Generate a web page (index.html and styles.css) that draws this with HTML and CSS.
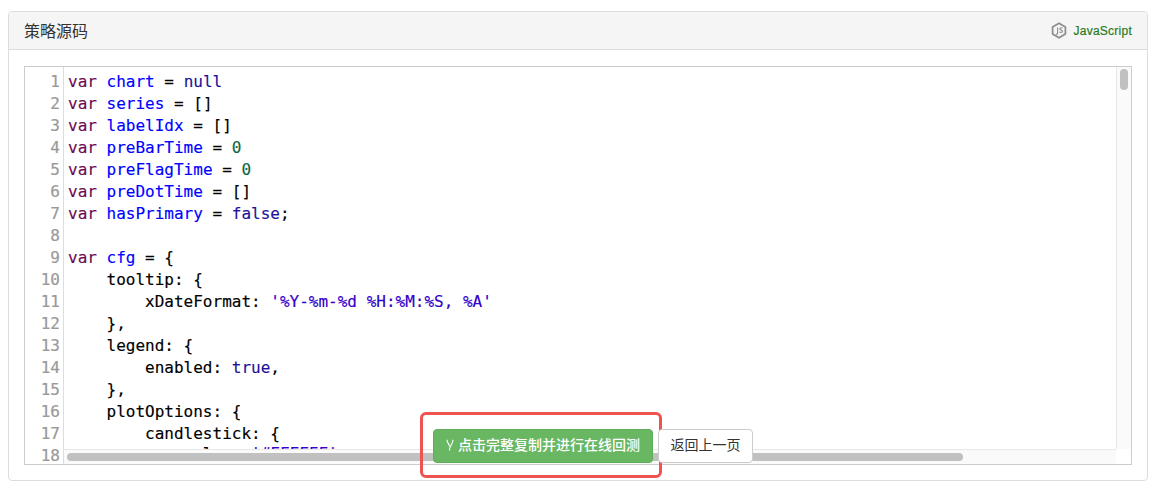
FILE: index.html
```html
<!DOCTYPE html>
<html lang="zh">
<head>
<meta charset="utf-8">
<title>策略源码</title>
<link rel="stylesheet" href="styles.css">
</head>
<body>
<section class="panel">
  <header class="panel-head">
    <h3 class="panel-title">策略源码</h3>
    <div class="lang">
      <svg class="lang-icon" viewBox="0 0 16 17" width="16" height="17" aria-hidden="true">
        <path d="M8 1.200 14.400 4.900v7.200L8 15.800 1.600 12.100V4.900Z" fill="none" stroke="#8c8c8c" stroke-width="1.700" stroke-linejoin="round"/>
        <path d="M6.600 5.500v5.700c0 1-.9 1.200-1.700.8" fill="none" stroke="#8c8c8c" stroke-width="1.100"/>
        <path d="M11.400 6.300c-.5-.7-2.500-.9-2.600.4-.1 1.400 2.700 1 2.700 2.500 0 1.400-2.200 1.400-3 .6" fill="none" stroke="#8c8c8c" stroke-width="1.100"/>
      </svg>
      <span class="lang-name">JavaScript</span>
    </div>
  </header>
  <div class="panel-body">
    <div class="editor">
      <div class="gutter">
        <div>1</div><div>2</div><div>3</div><div>4</div><div>5</div><div>6</div><div>7</div><div>8</div><div>9</div><div>10</div><div>11</div><div>12</div><div>13</div><div>14</div><div>15</div><div>16</div><div>17</div><div>18</div>
      </div>
      <pre class="code"><span class="k">var</span> <span class="d">chart</span> = <span class="a">null</span>
<span class="k">var</span> <span class="d">series</span> = []
<span class="k">var</span> <span class="d">labelIdx</span> = []
<span class="k">var</span> <span class="d">preBarTime</span> = <span class="n">0</span>
<span class="k">var</span> <span class="d">preFlagTime</span> = <span class="n">0</span>
<span class="k">var</span> <span class="d">preDotTime</span> = []
<span class="k">var</span> <span class="d">hasPrimary</span> = <span class="a">false</span>;

<span class="k">var</span> <span class="d">cfg</span> = {
    tooltip: {
        xDateFormat: <span class="s">'%Y-%m-%d %H:%M:%S, %A'</span>
    },
    legend: {
        enabled: <span class="a">true</span>,
    },
    plotOptions: {
        candlestick: {
<span class="last-line">            color: <span class="s">'#FFFFFF'</span>,</span></pre>
      <div class="scroll-v"><div class="thumb-v"></div></div>
      <div class="scroll-h"><div class="thumb-h"></div></div>
      <div class="scroll-corner"></div>
    </div>
  </div>
</section>
<div class="actions">
  <button class="btn btn-run" type="button">
    <svg class="fork" viewBox="0 0 8 12" width="8" height="12" aria-hidden="true">
      <path d="M1 .8C1 4 3.400 5 3.400 7.200M7 .8C7 5.500 3.400 6 3.400 11.500" fill="none" stroke="#fff" stroke-width="1.100"/>
    </svg>
    点击完整复制并进行在线回测
  </button>
  <button class="btn btn-back" type="button">返回上一页</button>
</div>
</body>
</html>
```

FILE: styles.css
```css
* { box-sizing: border-box; }
html, body { margin: 0; height: 100%; }
body {
  position: relative;
  padding: 11px 9px 8px 8px;
  background: #fff;
  overflow: hidden;
  font-family: "Liberation Sans", "Noto Sans CJK SC", sans-serif;
  color: #333;
}
.panel {
  height: 470px;
  border: 1px solid #ddd;
  border-radius: 4px;
  background: #fff;
  display: flex;
  flex-direction: column;
}
.panel-head {
  height: 38px;
  flex: none;
  display: flex;
  align-items: center;
  justify-content: space-between;
  padding: 0 15px;
  background: #f5f5f5;
  border-bottom: 1px solid #ddd;
  border-radius: 3px 3px 0 0;
}
.panel-title {
  margin: 0;
  padding-bottom: 2px;
  font-size: 16px;
  font-weight: 400;
  color: #333;
}
.lang { display: flex; align-items: center; gap: 6px; }
.lang-icon { display: block; }
.lang-name {
  font-size: 12px;
  letter-spacing: .25px;
  color: #2a7a1e;
  -webkit-text-stroke: .2px #2a7a1e;
}
.panel-body { flex: 1; padding: 16px 15px 15px; min-height: 0; }
.editor {
  position: relative;
  height: 100%;
  display: flex;
  border: 1px solid #ccc;
  overflow: hidden;
  background: #fff;
}
.gutter {
  width: 39px;
  flex: none;
  border-right: 1px solid #ddd;
  padding: 4px 3px 0 0;
  text-align: right;
  color: #999;
  font: 16px/22px "DejaVu Sans Mono", monospace;
  -webkit-text-stroke: .2px #999;
}
.code {
  margin: 0;
  padding: 4px 0 0 4px;
  flex: 1;
  color: #000;
  font: 16px/22px "DejaVu Sans Mono", monospace;
  -webkit-text-stroke: .15px;
}
.last-line { display: block; margin-top: -2px; }
.k { color: #6d0a50; }
.d { color: #00f; }
.a { color: #219; }
.n { color: #164; }
.s { color: #30c; }
.scroll-v {
  position: absolute;
  top: 0; right: 0; bottom: 15px;
  width: 15px;
  background: #fafafa;
  border-left: 1px solid #e8e8e8;
}
.thumb-v {
  margin: 2px 0 0 3px;
  width: 8px;
  height: 21px;
  border-radius: 4px;
  background: #c1c1c1;
}
.scroll-h {
  position: absolute;
  left: 39px; right: 15px; bottom: 0;
  height: 15px;
  padding: 3px 0 0 3px;
  background: #fafafa;
  border-top: 1px solid #e8e8e8;
}
.thumb-h {
  width: 896px;
  height: 8px;
  border-radius: 4px;
  background: #c1c1c1;
}
.scroll-corner {
  position: absolute;
  right: 0; bottom: 0;
  width: 15px; height: 15px;
  background: #fff;
}
.actions {
  position: absolute;
  left: 420px;
  top: 412px;
  display: flex;
  align-items: flex-start;
  width: 242px;
  height: 66px;
  padding: 14px 0 0 10px;
  gap: 5px;
  border: 3px solid #ee5350;
  border-radius: 6px;
}
.btn {
  flex: none;
  height: 34px;
  border-radius: 4px;
  border: 1px solid #ccc;
  font: 14px/1 "Liberation Sans", "Noto Sans CJK SC", sans-serif;
  padding: 0 0 2px;
}
.btn-run {
  width: 220px;
  background: #69b762;
  border-color: #5fae59;
  color: #fff;
  display: flex;
  align-items: center;
  justify-content: center;
  gap: 4px;
  font-weight: 500;
}
.fork { display: block; }
.btn-back {
  width: 95px;
  background: #fff;
  color: #333;
}
```
